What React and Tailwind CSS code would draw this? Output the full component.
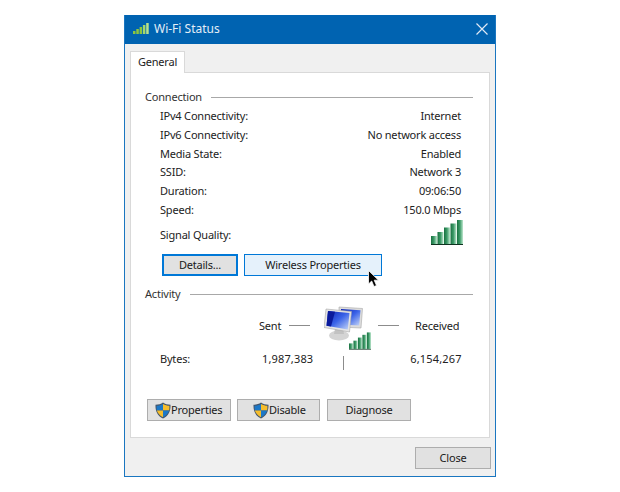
const FONT = "font-['Noto_Sans',sans-serif]";

const ROWS = [
  ["IPv4 Connectivity:", "Internet"],
  ["IPv6 Connectivity:", "No network access"],
  ["Media State:", "Enabled"],
  ["SSID:", "Network 3"],
  ["Duration:", "09:06:50"],
  ["Speed:", "150.0 Mbps"],
];

function WifiBars({ className }) {
  const bars = [
    [0, 16, 8],
    [6.500, 12, 12],
    [13, 7.500, 16.500],
    [19.500, 3.500, 20.500],
    [26, 0, 24],
  ];
  return (
    <svg viewBox="0 0 32 25" className={className}>
      <defs>
        <linearGradient id="barFill" x1="0" x2="1" y1="0" y2="0">
          <stop offset="0" stopColor="#17703f" />
          <stop offset="0.5" stopColor="#3f9c6a" />
          <stop offset="1" stopColor="#bfe8cf" />
        </linearGradient>
      </defs>
      {bars.map(([x, y, h]) => (
        <rect key={x} x={x} y={y} width="6" height={h} fill="url(#barFill)" />
      ))}
      <rect x="0" y="24" width="32" height="1" fill="#0e3320" />
    </svg>
  );
}

function Shield() {
  return (
    <svg viewBox="0 0 16 17" className="h-[17px] w-4 shrink-0">
      <path d="M8 .5 C10 2 12.500 2.700 15.500 2.700 C15.800 9 13.500 14 8 16.500 C2.500 14 .2 9 .5 2.700 C3.500 2.700 6 2 8 .5Z" fill="#44566b" />
      <path d="M8 2 V8.500 H1.800 C1.600 7 1.500 5.500 1.600 3.800 C3.800 3.700 6 3.200 8 2Z" fill="#1c78c8" />
      <path d="M8 2 C10 3.200 12.200 3.700 14.400 3.800 C14.500 5.500 14.400 7 14.200 8.500 H8Z" fill="#f6bd2b" />
      <path d="M1.800 8.500 H8 V15.200 C4.800 13.600 2.800 11.500 1.800 8.500Z" fill="#f6bd2b" />
      <path d="M14.200 8.500 H8 V15.200 C11.200 13.600 13.200 11.500 14.200 8.500Z" fill="#1c78c8" />
    </svg>
  );
}

function Computers() {
  return (
    <svg viewBox="0 0 40 36" className="h-[36px] w-[40px]">
      <defs>
        <linearGradient id="screen" x1="0" x2="1" y1="0" y2="1">
          <stop offset="0" stopColor="#0a1fb0" />
          <stop offset="0.5" stopColor="#3a63e8" />
          <stop offset="1" stopColor="#c8d8f8" />
        </linearGradient>
      </defs>
      <path d="M15 2 L38.500 3.500 L37 23 L15 22Z" fill="#dcdcdc" stroke="#a8a8a8" strokeWidth=".6" />
      <path d="M17 4 L36.500 5.200 L35.200 20.500 L17 19.500Z" fill="url(#screen)" />
      <ellipse cx="15" cy="30.500" rx="10" ry="5" fill="#d4d4d4" />
      <path d="M11 24 H19 L20 29 H10Z" fill="#c2c2c2" />
      <path d="M2 4 L27.500 6.500 L25.500 27 L0 22.500Z" fill="#e4e4e4" stroke="#a8a8a8" strokeWidth=".6" />
      <path d="M4 6 L25.500 8 L23.800 24.500 L2.500 20.800Z" fill="url(#screen)" />
      <path d="M4 6 L11 6.700 L7 21.600 L2.500 20.800Z" fill="#0a1a9c" />
    </svg>
  );
}

function Cursor() {
  return (
    <svg viewBox="0 0 12 18" className="absolute left-[368px] top-[270px] h-[18px] w-3">
      <path d="M.5 .5 V14 L3.700 11 L6 16.500 L8.500 15.500 L6.200 10.200 H10.500Z" fill="#000" stroke="#fff" strokeWidth=".8" />
    </svg>
  );
}

function Button({ children, className = "" }) {
  return (
    <button
      type="button"
      className={`flex h-[22px] items-center justify-center border text-[#1a1a1a] ${className}`}
    >
      {children}
    </button>
  );
}

function GroupTitle({ label }) {
  return (
    <div className="flex items-center gap-[9px] text-[#333]">
      <span>{label}</span>
      <span className="h-px flex-1 border-t border-[#a8a8a8]" />
    </div>
  );
}

const PLAIN = "border-[#adadad] bg-[#e1e1e1]";

export default function App() {
  return (
    <div className={`relative h-[492px] w-[620px] bg-white pl-[124px] pt-[15px] text-[11px] leading-[16px] tracking-[-0.2px] ${FONT}`}>
      <div className="flex h-[462px] w-[372px] flex-col border border-t-0 border-[#1a76c0] bg-[#f0f0f0]">
        <div className="flex h-[29px] shrink-0 items-center bg-[#0063b1] pb-[2px] pl-2 pr-[7px] text-[12px] tracking-normal text-[#e4eef7]">
          <svg viewBox="0 0 16 11" className="h-[11px] w-4">
            <rect x="0" y="8" width="2.500" height="3" fill="#8cc63f" />
            <rect x="3.300" y="6" width="2.500" height="5" fill="#8cc63f" />
            <rect x="6.600" y="4" width="2.500" height="7" fill="#8cc63f" />
            <rect x="9.900" y="2" width="2.500" height="9" fill="#a5d86a" />
            <rect x="13.200" y="0" width="2.500" height="11" fill="#b9e28a" />
          </svg>
          <span className="ml-[5px]">Wi-Fi Status</span>
          <svg viewBox="0 0 12 12" className="ml-auto h-3 w-3" stroke="#dfe9f4" strokeWidth="1.2">
            <path d="M.5 .5 11.500 11.500M11.500 .5 .5 11.500" />
          </svg>
        </div>

        <div className="px-[5px] pt-[7px]">
          <div className="relative z-10 -mb-px flex h-[22px] w-[55px] items-center justify-center border border-b-0 border-[#d9d9d9] bg-white pb-[2px] text-[#222]">
            General
          </div>
          <div className="h-[366px] w-[360px] border border-[#d9d9d9] bg-white pl-[14px] pr-4 pt-4">
            <GroupTitle label="Connection" />
            <div className="mt-[2px] pl-[15px] text-[#222]">
              {ROWS.map(([label, value]) => (
                <div key={label} className="flex h-[18.7px] items-center justify-between pr-[12px]">
                  <span>{label}</span>
                  <span>{value}</span>
                </div>
              ))}
              <div className="flex h-[31px] items-center justify-between pr-[10px]">
                <span className="mt-[1px]">Signal Quality:</span>
                <WifiBars className="-mt-[4px] h-[25px] w-[32px]" />
              </div>
            </div>
            <div className="mt-[4px] flex gap-[6px] pl-[17px]">
              <Button className="h-[21px] w-[76px] border-2 border-[#0078d7] bg-[#e1e1e1]">Details...</Button>
              <Button className="h-[21px] w-[138px] border-[#0078d7] bg-[#e5f1fb]">Wireless Properties</Button>
            </div>

            <div className="mt-[10px]">
              <GroupTitle label="Activity" />
            </div>
            <div className="mt-[1px] flex h-[40px] pl-[114px] text-[#222]">
              <span className="mt-[15px] w-[29px]">Sent</span>
              <span className="ml-[1px] mt-[22px] h-0 w-[21px] border-t border-[#8c8c8c]" />
              <div className="relative ml-[14px] h-[40px] w-[40px] pt-[2px]">
                <Computers />
                <WifiBars className="absolute left-[25px] top-[29px] h-[18px] w-[22px]" />
              </div>
              <span className="ml-[14px] mt-[22px] h-0 w-[21px] border-t border-[#8c8c8c]" />
              <span className="ml-[16px] mt-[15px]">Received</span>
            </div>
            <div className="mt-[8px] flex pl-[15px] text-[#222] tracking-[0.15px]">
              <span className="w-[102px] tracking-[-0.2px]">Bytes:</span>
              <span>1,987,383</span>
              <span className="ml-[30px] mt-[5px] h-[14px] w-0 border-l border-[#8c8c8c]" />
              <span className="ml-[66px]">6,154,267</span>
            </div>

            <div className="mt-[29px] flex gap-[6px] pl-[2px]">
              <Button className={`w-[84px] !justify-start pl-[7px] ${PLAIN}`}>
                <Shield />
                <span>Properties</span>
              </Button>
              <Button className={`w-[83px] !justify-start pl-[15px] ${PLAIN}`}>
                <Shield />
                <span>Disable</span>
              </Button>
              <Button className={`ml-[1px] w-[84px] ${PLAIN}`}>Diagnose</Button>
            </div>
          </div>
          <div className="-mr-px mt-[9px] flex justify-end">
            <Button className={`w-[76px] ${PLAIN}`}>Close</Button>
          </div>
        </div>
      </div>
      <Cursor />
    </div>
  );
}
